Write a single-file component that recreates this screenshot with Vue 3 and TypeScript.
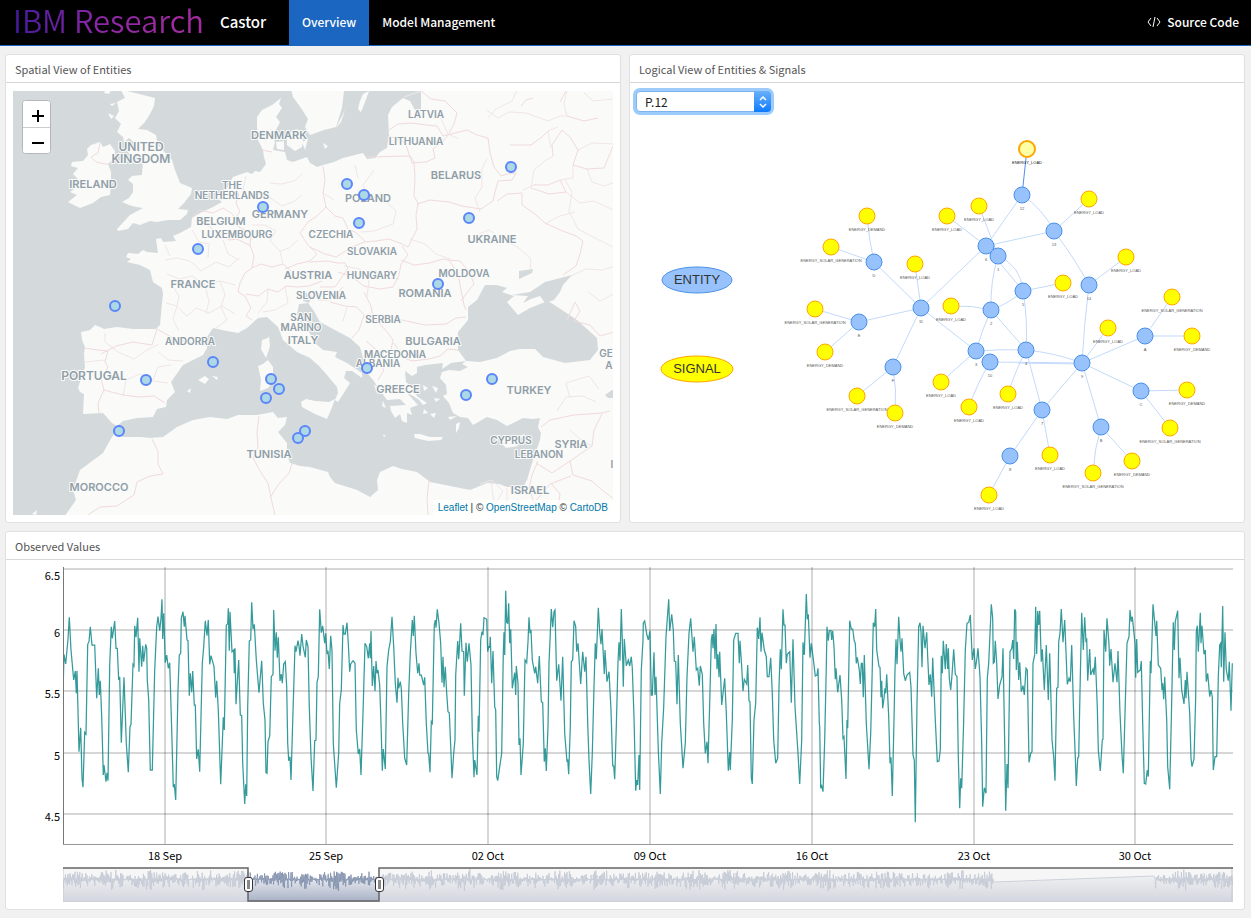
<script setup lang="ts">
import { ref } from 'vue'

type Point = [number, number]

const site = ref('P.12')
const sites = ['P.12', 'P.13', 'P.14']

/* ---------- map ---------- */
const land: string[] = [
  // continental Europe
  'M421 85 L421 110 415 110 410 101 403 98 392 107 388 115 389 135 387 148 380 152 375 158 367 159 363 153 343 158 334 162 323 165 317 167 310 163 307 157 293 162 287 160 285 152 273 150 275 142 272 136 277 128 280 122 276 117 282 108 279 104 281 98 272 105 262 110 257 117 257 126 258 140 263 150 264 157 266 164 260 172 255 171 252 174 247 172 233 177 227 188 217 198 222 202 213 207 200 213 192 218 191 227 180 233 173 236 176 241 163 242 161 238 156 239 158 253 147 252 143 250 138 254 128 253 126 257 131 259 127 262 140 265 150 270 153 282 162 288 163 294 162 303 160 325 156 329 150 329 133 329 117 327 104 329 100 327 95 325 90 330 81 332 82 340 85 347 84 354 85 367 78 388 80 392 84 394 83 414 103 413 112 423 117 426 123 421 137 418 153 417 157 409 166 407 167 400 175 392 171 382 183 365 203 355 207 348 207 337 213 328 227 331 238 333 247 328 258 318 267 317 278 327 283 340 297 352 310 358 319 366 327 375 337 387 338 393 335 400 338 402 347 388 350 383 344 378 346 371 352 371 362 378 362 373 347 363 335 357 337 352 323 350 315 343 308 330 301 322 297 314 299 304 308 303 314 311 320 322 335 330 350 338 360 347 363 358 363 368 373 380 382 393 387 400 400 399 406 405 390 406 391 411 395 418 400 414 402 421 407 423 407 413 412 415 410 408 418 405 407 393 413 396 419 400 413 388 406 382 405 371 412 376 417 373 417 367 425 365 443 363 442 369 451 363 466 361 458 350 458 332 468 320 468 307 477 300 485 285 497 285 507 288 502 292 514 296 507 302 518 315 530 308 540 304 548 301 556 306 577 320 597 338 598 350 590 360 565 363 543 357 535 349 520 349 510 351 497 358 480 362 466 361 462 364 468 367 460 371 449 370 442 372 440 378 446 385 447 394 443 396 449 403 453 413 460 417 468 418 473 425 487 417 497 420 507 426 523 418 533 419 540 418 538 427 541 433 540 440 533 460 527 480 523 487 507 487 499 484 487 483 470 490 430 482 417 472 402 469 393 466 380 472 377 480 378 490 370 497 357 490 335 483 330 477 328 472 310 467 300 466 290 463 287 455 287 443 278 432 285 425 287 417 278 418 273 412 257 415 238 415 227 419 210 417 193 420 177 427 163 437 150 438 141 437 123 437 115 433 112 437 103 453 80 470 73 490 76 500 62 520 620 520 620 85Z',
  // Great Britain
  'M126 85 L127 91 155 98 154 106 150 114 145 122 138 129 147 130 156 135 158 145 172 160 175 170 180 183 192 188 191 194 184 203 178 209 188 210 187 214 180 220 168 220 157 222 150 221 140 225 133 223 128 229 118 231 117 229 130 215 143 208 136 207 129 205 122 202 129 198 133 192 133 184 128 180 132 176 142 175 143 160 139 155 132 157 128 152 135 143 129 138 124 142 123 137 117 132 121 124 115 118 119 111 117 102 125 98 121 90Z',
  'M109 94 L113 87 107 86 104 93Z M112 106 L116 103 110 104Z M108 113 L114 116 111 119Z',
  // Ireland
  'M100 142 L103 147 110 144 115 151 114 158 108 164 111 172 111 185 110 195 101 197 93 203 80 208 68 202 77 195 70 192 78 186 71 183 78 179 73 174 78 168 71 166 72 162 83 161 88 155 87 149 91 145Z',
  // Scandinavia
  'M290 85 L293 97 301 108 308 119 305 127 310 135 324 130 336 127 342 108 344 91 344 85Z',
  'M360 101 L363 94 369 91 365 102 361 112 358 109Z M341 122 L336 128 345 110Z',
  // Danish islands
  'M287 135 L296 129 304 133 302 147 295 151 287 145Z M276 142 L284 141 284 150 277 149Z M302 142 L308 139 305 150Z M323 143 L328 146 325 149Z',
  // Corsica, Sardinia, Sicily
  'M269 336 L270 346 266 358 261 349 262 340 268 338Z',
  'M268 360 L273 367 273 382 268 388 260 391 261 380 258 366 263 364Z',
  'M335 399 L329 402 315 401 306 399 301 402 302 407 315 414 327 419 331 410Z',
  // Balearic islands
  'M198 380 L205 376 209 379 205 384Z M212 376 L218 377 217 380Z M187 391 L191 388 190 393Z',
  // Crete, Cyprus, Aegean islands
  'M414 434 L420 434 430 437 443 437 441 440 428 441 415 438Z',
  'M500 442 L506 437 514 438 525 434 518 441 518 446 506 448Z',
  'M423 385 L428 388 424 391Z M432 386 L438 388 436 393Z M434 398 L440 399 436 402Z M424 409 L428 413 423 414Z M430 414 L436 413 434 418Z M456 424 L460 422 459 428 456 433Z M448 417 L457 416 450 420Z M415 395 L427 403 423 405Z M374 384 L378 388 376 391Z M383 401 L386 408 382 406Z',
  'M32 514 L37 510 36 515Z M384 434 L386 437 383 436Z'
]
const lakes: string[] = [
  'M512 295 L530 292 545 282 572 275 563 285 560 292 554 300 545 303 540 296 531 299 523 303 528 296Z',
  'M620 391 L612 390 605 395 608 398 620 398Z',
  'M519 271 L533 269 532 273 519 279Z',
  'M303 291 L312 296 309 303 303 301Z'
]
const borders: string[] = [
  'M100 143 L98 153 91 157 96 162 105 164 112 164',
  'M228 190 L239 194 236 203 240 212 235 218 239 227 251 233 250 245 254 256 252 268 245 273 240 283 238 292 245 296 251 308 246 316 252 320',
  'M192 217 L200 210 213 213 223 208 231 213 236 218 M200 219 L211 228 219 233 229 240 237 239 251 246',
  'M252 268 L261 264 272 267 283 264 291 271 M246 294 L258 296 268 289 278 292 286 286 298 287 309 286 322 281',
  'M262 150 L272 152 M323 166 L325 180 323 193 326 207 317 216 308 222 300 233 308 245 317 254 310 261 297 264 285 269',
  'M326 207 L335 216 343 218 348 229 355 232 365 241 M310 247 L325 254 336 257 352 247 364 242 376 241 389 239 402 244 408 247',
  'M408 247 L417 229 416 215 418 203 414 196 415 178 414 162 410 156 367 157 M389 136 L405 142 412 163 426 162 435 158 433 149 444 140 449 134',
  'M389 130 L398 124 412 123 426 125 437 126 443 136 455 133 467 130 477 135 488 138 490 153 494 167 501 176 507 174 516 173 512 180 498 181 495 192 493 201 481 209 462 206 449 202 430 200 417 204',
  'M497 201 L507 194 522 193 522 205 535 214 545 223 560 230 576 236 583 241 580 254 576 266 563 275',
  'M421 91 L431 99 445 101 457 113 454 124 449 133 M338 272 L352 277 364 286 380 289 393 287 399 275 401 264 408 255 402 246',
  'M310 262 L328 261 337 263 345 263 348 268 340 280 335 287 320 287 M401 260 L414 265 430 263 443 259 449 260 458 274 461 290 464 305 466 310',
  'M449 260 L460 261 470 273 474 284 466 294 461 301 M318 300 L330 300 338 292 343 287 M330 302 L345 306 357 307 364 315 359 330 352 338 M364 292 L371 306 373 318 381 323 390 318 402 320 425 325 446 324 456 318 466 317',
  'M379 323 L388 333 393 340 391 350 381 353 373 347 366 341 M394 343 L402 357 412 361 429 359 440 356 448 349 458 350 M379 351 L379 364 384 370 378 380 M387 356 L398 360',
  'M84 348 L98 350 108 351 105 362 108 367 101 379 104 390 98 403 99 414 M101 354 L116 346 133 342 152 345 157 329',
  'M157 329 L171 337 184 341 197 344 209 345 M104 390 L123 395 139 397 154 396 165 403',
  'M152 439 L158 451 158 464 163 474 150 476 137 482 134 495 117 506 100 507 88 515',
  'M259 416 L257 432 258 447 253 458 260 471 268 483 271 498 275 515 M270 498 L278 485 289 473 292 464',
  'M429 481 L427 498 428 515 M541 427 L550 420 574 415 602 413 610 411 M602 414 L594 430 592 446 570 461 552 473 536 463 M570 461 L573 475 592 481 602 490 615 500 M538 461 L532 475 529 488 534 503 550 484 571 476 M551 483 L560 494 558 508',
  'M613 146 L604 168 587 169 573 165 578 150 570 137 562 130 552 145 553 156 M510 145 L531 145 542 137 548 131 M560 102 L566 91 M567 116 L584 121 598 118 M521 106 L526 100 533 98 M534 185 L548 185 560 180 566 192 549 194 531 188',
  'M567 320 L575 302 580 311 574 321 590 325 600 336 614 332'
]
const regions: string[] = [
  'M165 260 L177 258 190 261 201 271 216 262 229 267 239 258 M167 274 L180 279 192 276 205 285 220 281 235 285 M172 285 L179 296 177 306 187 316 196 308 209 313 222 306 235 314 M205 286 L209 301 206 314 M220 282 L225 294 221 307 227 320 216 328',
  'M165 245 L170 256 M192 230 L199 242 209 244 208 258 M223 240 L228 254 239 260 M166 303 L177 306 173 319 179 331 M85 362 L105 360 M105 333 L105 342 118 352 134 359 147 350 159 344 M123 396 L126 380 140 374 153 381 168 383 M159 352 L168 360 183 361 M153 380 L158 367 171 365',
  'M270 183 L281 184 294 181 302 174 M246 176 L243 190 248 199 259 194 270 199 M270 198 L282 206 293 202 302 195 M252 225 L265 225 276 231 270 241 280 251 289 248 298 240 M280 251 L283 264 M268 289 L267 302 258 313 M285 287 L288 303 275 310 263 312',
  'M374 170 L363 185 367 195 383 199 396 211 393 224 374 231 361 232 M410 239 L425 244 436 254 450 259 M479 234 L489 230 494 233 M507 242 L519 248 531 259 530 270 M404 97 L421 91 M440 116 L448 134 459 139 M488 118 L496 109 512 101 519 86',
  'M487 158 L482 169 482 187 475 198 480 212 M536 184 L523 190 M565 180 L572 192 569 211 578 229 597 239 615 248 M545 224 L560 216 575 212 M551 148 L548 131 558 127 M571 276 L586 269 602 270 616 266 M588 292 L600 301 614 294',
  'M557 411 L566 397 583 396 596 402 M570 398 L566 383 589 376 599 389 M480 484 L492 480 503 491 496 503 M491 482 L494 503 499 515 M507 488 L507 503 M570 430 L580 439 592 446 M347 307 L343 321 M375 270 L384 278 399 279 M344 266 L360 269 369 280 367 297',
  'M487 110 L498 118 509 112 526 113 548 121 560 116 567 116 M567 91 L564 104 567 116 M584 93 L593 101 613 99 M578 150 L592 143 613 144 M531 188 L534 170 546 160 553 156 M560 180 L573 178 573 165 M587 169 L592 182 604 186 613 183 M566 192 L580 203 594 201 613 210 M323 193 L334 200 M355 165 L358 178'
]
const places: [string, number, number, string][] = [
  ['UNITED', 141, 151, 'large'], ['KINGDOM', 141, 163, 'large'], ['IRELAND', 93, 188, 'medium'], ['DENMARK', 279, 139, 'medium'],
  ['THE', 232, 189, 'small'], ['NETHERLANDS', 232, 199, 'small'], ['BELGIUM', 221, 225, 'medium'], ['LUXEMBOURG', 237, 238, 'small'],
  ['GERMANY', 280, 218, 'medium'], ['FRANCE', 193, 288, 'medium'], ['LATVIA', 426, 118, 'small'], ['LITHUANIA', 416, 145, 'small'],
  ['BELARUS', 456, 179, 'medium'], ['POLAND', 368, 202, 'medium'], ['CZECHIA', 331, 238, 'small'], ['SLOVAKIA', 372, 255, 'small'],
  ['UKRAINE', 492, 243, 'medium'], ['AUSTRIA', 308, 279, 'medium'], ['HUNGARY', 372, 279, 'small'], ['MOLDOVA', 464, 277, 'small'],
  ['ROMANIA', 425, 297, 'medium'], ['SLOVENIA', 321, 299, 'small'], ['SAN', 301, 321, 'small'], ['MARINO', 301, 331, 'small'],
  ['ITALY', 303, 344, 'medium'], ['SERBIA', 383, 323, 'small'], ['BULGARIA', 433, 345, 'medium'], ['MACEDONIA', 395, 358, 'small'],
  ['ALBANIA', 378, 367, 'small'], ['ANDORRA', 190, 345, 'small'], ['PORTUGAL', 94, 380, 'large'], ['GREECE', 398, 393, 'medium'],
  ['TURKEY', 529, 394, 'medium'], ['CYPRUS', 511, 444, 'small'], ['SYRIA', 571, 448, 'medium'], ['LEBANON', 539, 458, 'small'],
  ['ISRAEL', 530, 494, 'medium'], ['TUNISIA', 269, 458, 'medium'], ['MOROCCO', 99, 491, 'medium'], ['GE', 606, 357, 'small'],
  ['A', 609, 369, 'small'], ['I', 612, 468, 'small']
]
const markers: Point[] = [
  [511, 167], [347, 184], [364, 195], [263, 207], [359, 223], [469, 218], [198, 249], [438, 284], [115, 306],
  [213, 362], [146, 380], [271, 379], [279, 389], [266, 398], [367, 368], [492, 379], [466, 395], [119, 431],
  [305, 431], [298, 438]
]

/* ---------- graph ---------- */
const entities: [string, number, number][] = [
  ['D', 874, 262], ['11', 921, 308], ['E', 859, 322], ['F', 893, 367], ['12', 1022, 195], ['13', 1054, 231],
  ['6', 986, 246], ['1', 998, 256], ['5', 1023, 291], ['2', 991, 310], ['3', 976, 351], ['4', 1026, 350],
  ['10', 990, 362], ['9', 1082, 363], ['14', 1089, 285], ['A', 1145, 336], ['C', 1141, 391], ['B', 1101, 427],
  ['7', 1042, 410], ['8', 1010, 456]
]
const LOAD = 'ENERGY_LOAD'
const DEMAND = 'ENERGY_DEMAND'
const SOLAR = 'ENERGY_SOLAR_GENERATION'
const signals: [string, number, number][] = [
  [DEMAND, 867, 216], [SOLAR, 831, 247], [LOAD, 915, 264], [SOLAR, 815, 309], [DEMAND, 825, 352],
  [SOLAR, 857, 396], [DEMAND, 895, 413], [LOAD, 947, 216], [LOAD, 979, 206], [LOAD, 1089, 199],
  [LOAD, 1126, 257], [LOAD, 1063, 283], [LOAD, 951, 306], [LOAD, 1108, 328], [SOLAR, 1172, 297],
  [DEMAND, 1192, 336], [DEMAND, 1187, 390], [SOLAR, 1170, 428], [LOAD, 941, 382], [LOAD, 969, 407],
  [LOAD, 1008, 394], [LOAD, 1050, 455], [SOLAR, 1093, 473], [DEMAND, 1132, 461], [LOAD, 989, 495]
]
const links: string[] = [
  'M867 216 Q869 240 874 262', 'M831 247 L874 262', 'M874 262 L921 308', 'M915 264 L921 308', 'M815 309 L859 322',
  'M859 322 L825 352', 'M859 322 L921 308', 'M921 308 L893 367', 'M893 367 L857 396', 'M893 367 Q897 390 895 413',
  'M921 308 L986 246', 'M921 308 L976 351', 'M947 216 L986 246', 'M979 206 L998 256', 'M1022 195 L986 246',
  'M1022 195 Q1042 208 1054 231', 'M1054 231 L986 246', 'M1054 231 L1089 199', 'M1054 231 Q1077 262 1089 285',
  'M1089 285 L1126 257', 'M1089 285 Q1084 324 1082 363', 'M998 256 Q1021 266 1023 291', 'M986 246 L1023 291',
  'M998 256 Q990 282 991 310', 'M1023 291 L1063 283', 'M1023 291 Q1010 303 991 310', 'M1023 291 Q1028 320 1026 350',
  'M951 306 Q972 305 991 310', 'M991 310 Q982 330 976 351', 'M991 310 L1026 350', 'M976 351 Q1000 349 1026 350',
  'M976 351 L941 382', 'M990 362 Q976 386 969 407', 'M990 362 L1082 363', 'M1026 350 Q1056 353 1082 363',
  'M1018 363 L1082 364', 'M1026 350 Q1014 374 1008 394', 'M1026 350 L1042 410', 'M1042 410 L1082 363',
  'M1042 410 L1010 456', 'M1042 410 L1050 455', 'M1010 456 L989 495', 'M1082 363 L1108 328', 'M1082 363 L1145 336',
  'M1145 336 L1172 297', 'M1145 336 L1192 336', 'M1082 363 L1141 391', 'M1141 391 L1187 390', 'M1141 391 L1170 428',
  'M1082 363 L1101 427', 'M1101 427 Q1094 450 1093 473', 'M1101 427 L1132 461'
]

/* ---------- observed values, in thirds of a plot unit ---------- */
const samples: { x: number; y: number; points: string }[] = [
  {
    x: 190, y: 111,
    points: '190,490 193,373 198,402 205,328 209,262 214,360 222,450 227,423 230,490 232,422 238,665 243,593 247,745 250,772 255,607 259,612 264,343 268,335 272,290 277,345 285,345 291,505 296,415 299,495 302,452 306,560 311,735 313,705 319,755 322,728 325,752 330,405 335,290 338,325 345,273 349,355 353,355 357,450 360,440 365,638 373,442 380,640 386,727 391,590 394,583 400,403 403,408 405,287 409,322 414,263 418,425 420,325 426,410 429,347 432,395 438,343 441,355 443,450 447,510 452,720 458,720 465,420 471,290 475,260 480,302 484,265 487,208 489,327 492,250 497,398 501,375 506,415 510,398 516,600 521,772 524,762 528,810 535,480 539,375 543,370 545,265 550,245 554,290 556,257 562,330 565,332 569,497 572,430 576,487 579,423 584,525 587,525 591,687 596,658 600,725 604,560 608,400 612,350 617,272 622,317 626,270 630,403 634,377 643,410 648,503 651,452 656,540 663,763 671,562 674,600 680,285 684,282 686,235 689,362 691,245 697,365 702,360 704,430 706,355 709,523 713,457 717,390 722,555 726,557 729,700 735,822 738,763 741,798 744,530 749,333 753,330 756,217 760,297 764,283 770,390 778,488 786,392 791,520 796,570 799,728 802,730 805,635 810,618 815,440 820,433 822,240 826,362 830,307 833,383 836,322 841,453 845,432 848,460 852,402 857,395 861,470 864,640 867,692 871,680 874,750 880,545 886,347 889,365 895,332 898,348 901,377 906,312 910,348 917,382 920,330 925,350 929,530 934,680 940,783 945,632 949,630 952,457 956,440 960,238 965,308 969,288 975,340 978,310 982,372 985,362 989,417 993,317 997,362 1001,640 1010,773 1017,668 1020,520 1025,480 1030,285 1033,312 1037,312 1042,278 1046,340 1050,425 1053,402 1060,392 1066,400 1070,600 1076,672 1080,657 1084,735 1090,550 1096,340 1101,350 1106,385 1110,340 1112,385 1114,303 1118,468 1122,408 1126,483 1129,393 1132,430 1135,420 1140,465 1144,580 1148,722 1151,657 1157,717 1162,410 1167,360 1172,335 1177,260 1182,350 1187,460 1192,518 1195,443 1197,475 1202,455 1205,475 1209,580 1215,685 1221,705 1227,490 1232,370 1238,270 1241,318 1244,257 1249,370 1254,430 1258,400'
  },
  {
    x: -1010, y: 21,
    points: '60,345 65,345 72,375 75,352 80,490 85,580 87,582 91,637 95,485 98,490 104,195 107,180 109,203 113,148 118,190 123,250 127,368 130,290 133,382 137,320 141,400 145,455 149,458 154,580 157,655 162,580 166,540 168,345 174,243 177,298 183,190 187,273 192,275 194,407 199,248 203,305 208,250 214,315 218,520 223,652 225,600 232,645 236,467 238,515 243,240 247,215 250,225 253,173 261,178 264,275 267,260 270,262 272,230 276,370 280,273 285,440 288,450 291,650 294,662 300,620 306,580 311,280 313,217 315,285 318,92 321,188 324,190 327,130 330,250 333,208 338,385 345,338 348,405 350,318 355,370 358,555 361,535 364,645 371,550 376,300 381,308 385,245 388,172 391,220 394,210 398,300 405,340 408,320 414,370 419,288 425,425 429,428 434,605 437,565 440,633 445,500 448,310 452,220 455,147 459,202 463,155 466,150 471,362 477,313 484,422 489,290 495,520 502,605 504,598 507,643 512,500 515,305 519,300 523,182 528,200 531,275 535,250 543,372 549,275 555,335 559,290 564,490 568,600 573,702 578,580 583,380 587,250 590,298 596,143 600,215 604,253 607,207 614,342 616,270 622,365 628,335 634,450 639,617 642,618 645,658 650,500 655,305 658,247 661,302 665,147 668,240 671,380 674,237 680,317 686,300 690,318 695,290 698,325 703,470 708,692 711,660 714,675 718,585 720,690 725,330 730,240 731,190 735,183 741,222 746,240 751,213 755,405 758,405 763,277 766,405 769,350 776,570 782,702 786,550 792,440 799,230 804,160 807,118 810,213 816,163 821,210 824,303 828,305 832,433 836,285 842,490 850,625 857,550 862,350 868,220 873,175 880,275 884,230 890,330 894,325 899,377 902,318 908,343 912,490 917,580 922,545 925,610 930,430 935,240 938,222 940,265 943,207 946,297 949,192 952,328 955,283 958,352 960,275 966,435 975,355 980,460 986,632 990,577 992,630 998,480 1002,240 1008,220 1015,220 1019,310 1021,242 1026,320 1030,393 1034,358 1041,372 1044,315 1048,422 1051,425 1055,655 1058,672 1063,480 1068,430 1073,203 1077,237 1081,172 1084,275 1087,218 1094,270 1100,290 1103,350 1108,350 1113,293 1118,400 1122,540 1128,610 1134,595 1138,380 1142,268 1145,328 1150,148 1153,195 1156,195 1160,310 1163,283 1170,275 1175,428 1180,238 1186,440 1195,580 1200,672 1206,540 1210,247 1214,285 1220,102 1223,178 1226,163 1231,293 1235,250 1240,290 1247,348 1252,345 1255,325 1259,490'
  },
  {
    x: -2270, y: 21,
    points: '0,500 3,685 6,678 10,695 15,540 20,320 22,200 26,242 29,212 34,212 36,240 39,212 43,260 47,358 49,325 54,397 61,345 66,420 70,535 73,530 79,657 82,480 84,505 90,182 95,207 99,207 104,243 107,250 110,310 113,292 119,330 122,372 125,310 128,310 131,412 134,285 140,490 148,628 153,520 157,360 161,188 165,200 168,147 171,270 178,320 181,322 184,412 186,362 189,445 193,415 196,385 198,400 201,343 207,470 211,610 214,592 218,708 223,480 226,330 229,238 232,313 237,170 241,240 244,275 247,235 252,340 257,362 262,345 270,337 274,380 280,585 284,600 287,787 292,430 297,200 301,188 304,215 307,322 310,197 316,265 321,217 324,290 328,375 332,343 336,410 339,293 347,480 353,605 358,603 362,570 365,287 368,340 371,242 377,328 380,252 384,327 386,265 389,355 393,390 397,345 402,268 407,343 412,350 416,590 420,745 423,655 426,685 432,480 437,270 442,190 447,187 452,165 458,300 463,265 467,327 471,300 475,265 481,350 486,550 489,740 494,683 499,700 503,355 507,310 515,133 519,175 521,310 524,307 527,242 531,310 535,417 540,375 547,350 550,265 555,550 558,752 562,612 565,685 571,275 576,265 579,240 582,297 585,148 588,155 590,330 593,245 597,360 600,307 605,395 610,377 614,405 619,325 623,330 628,607 633,580 637,575 640,310 645,285 648,140 651,282 654,153 657,195 660,152 665,305 668,268 674,390 680,255 686,420 690,280 695,455 697,540 702,590 706,662 711,385 715,382 717,245 721,220 725,147 730,247 735,180 743,373 748,355 752,365 756,255 762,470 767,590 770,678 774,595 777,590 782,350 786,158 791,270 795,172 799,247 801,235 804,362 810,267 813,345 820,327 823,345 827,290 833,440 836,570 842,633 848,540 850,538 853,210 858,275 862,175 868,253 870,317 874,267 880,367 886,310 892,367 895,273 901,460 907,585 911,640 917,430 922,250 928,230 931,150 935,185 938,170 946,250 948,353 951,237 954,337 962,330 965,303 969,490 974,670 978,672 983,630 986,650 992,303 994,340 1000,133 1009,228 1011,182 1016,315 1023,325 1027,390 1029,370 1032,418 1035,350 1041,480 1044,620 1050,688 1055,480 1061,187 1064,270 1067,185 1074,152 1078,355 1081,293 1086,390 1093,432 1097,360 1099,415 1102,335 1110,460 1114,595 1117,620 1123,597 1128,410 1130,215 1133,197 1136,275 1142,158 1144,250 1147,197 1153,283 1157,270 1160,365 1164,340 1170,410 1174,390 1178,410 1181,630 1186,590 1191,590 1196,350 1200,255 1203,250 1205,322 1209,138 1212,365 1216,217 1220,330 1226,362 1229,305 1234,452 1238,310'
  }
]
const series = samples
  .flatMap(({ x, y, points }) =>
    points.split(' ').map((pair) => {
      const [px, py] = pair.split(',').map(Number)
      return `${((px - x) / 3).toFixed(1)},${((py - y) / 3).toFixed(1)}`
    })
  )
  .join(' ')

/* label centred on its gridline, kept inside the plot at the top */
const yTicks: [string, number][] = [['6.5', 2], ['6', 63], ['5.5', 124], ['5', 186], ['4.5', 247]]
const labelTop = (y: number) => Math.max(2, y - 4)
const xTicks: [string, number][] = [
  ['18 Sep', 102], ['25 Sep', 263], ['02 Oct', 425], ['09 Oct', 587], ['16 Oct', 749], ['23 Oct', 911], ['30 Oct', 1072]
]

/* ---------- overview strip ---------- */
function buildOverview(): string {
  let seed = 7
  const random = () => {
    seed = (seed * 16807) % 2147483647
    return seed / 2147483647
  }
  const out: string[] = []
  for (let step = 0; step <= 1950; step += 1) {
    const x = step * 0.6
    if (x > 930 && x < 1092) continue
    const swell = 0.75 + 0.25 * Math.sin(x / 6) * Math.sin(x / 37)
    const reach = Math.pow(random(), 1.6)
    const offset = step % 2 === 0 ? -reach * 10 : 1 + reach * 12
    out.push(`${x.toFixed(1)},${(12 + offset * swell).toFixed(1)}`)
    if (step === 1550) out.push('931,15', '1091,9')
  }
  return out.join(' ')
}
const overview = buildOverview()
</script>

<template>
  <div class="page">
    <header class="topbar">
      <a class="brand" href="#"><span class="logo">IBM Research</span><span class="product">Castor</span></a>
      <nav class="tabs">
        <a class="tab active" href="#overview">Overview</a>
        <a class="tab" href="#models">Model Management</a>
      </nav>
      <a class="source" href="#source">
        <svg class="code-icon" viewBox="0 0 14 10" aria-hidden="true">
          <path d="M4 1 L1 5 L4 9 M10 1 L13 5 L10 9 M8 0 L6 10" />
        </svg>
        Source Code
      </a>
    </header>

    <main class="board">
      <section class="panel">
        <h2>Spatial View of Entities</h2>
        <div class="map">
          <svg class="map-canvas" viewBox="13 91 600 424" preserveAspectRatio="xMidYMid slice" role="img" aria-label="Map of Europe">
            <path v-for="(d, i) in land" :key="'l' + i" class="land" :d="d" />
            <path v-for="(d, i) in lakes" :key="'w' + i" class="lake" :d="d" />
            <path v-for="(d, i) in regions" :key="'r' + i" class="region" :d="d" />
            <path v-for="(d, i) in borders" :key="'b' + i" class="border" :d="d" />
            <text v-for="[name, x, y, size] in places" :key="name" :class="['place', size]" :x="x" :y="y">{{ name }}</text>
            <circle v-for="([x, y], i) in markers" :key="'m' + i" class="marker" :cx="x" :cy="y" r="5" />
          </svg>
          <div class="zoom">
            <button type="button" aria-label="Zoom in">
              <svg viewBox="0 0 12 12" aria-hidden="true"><path d="M0 6 H12 M6 0 V12" /></svg>
            </button>
            <button type="button" aria-label="Zoom out">
              <svg viewBox="0 0 12 12" aria-hidden="true"><path d="M0 6 H12" /></svg>
            </button>
          </div>
          <div class="attribution">
            <a href="#leaflet">Leaflet</a> | © <a href="#osm">OpenStreetMap</a> © <a href="#carto">CartoDB</a>
          </div>
        </div>
      </section>

      <section class="panel">
        <h2>Logical View of Entities &amp; Signals</h2>
        <div class="graph">
          <div class="picker">
            <select v-model="site" aria-label="Entity">
              <option v-for="s in sites" :key="s">{{ s }}</option>
            </select>
            <span class="arrows">
              <svg viewBox="0 0 8 14" aria-hidden="true"><path d="M1 5 L4 2 L7 5 M1 9 L4 12 L7 9" /></svg>
            </span>
          </div>
          <svg class="network" viewBox="630 115 614 406" role="img" aria-label="Entities and signals">
            <path v-for="(d, i) in links" :key="i" class="link" :d="d" />
            <path class="link strong" d="M1027 149 L1022 195" />
            <g v-for="[name, x, y] in entities" :key="name" class="node entity">
              <circle :cx="x" :cy="y" r="8" />
              <text :x="x" :y="y + 15">{{ name }}</text>
            </g>
            <g v-for="([name, x, y], i) in signals" :key="i" class="node signal">
              <circle :cx="x" :cy="y" r="8" />
              <text :x="x" :y="y + 15">{{ name }}</text>
            </g>
            <g class="node signal selected">
              <circle cx="1027" cy="149" r="8" />
              <text x="1027" y="164">ENERGY_LOAD</text>
            </g>
            <g class="key entity">
              <ellipse cx="697" cy="280" rx="35" ry="13" />
              <text x="697" y="284">ENTITY</text>
            </g>
            <g class="key signal">
              <ellipse cx="697" cy="369" rx="36" ry="13" />
              <text x="697" y="373">SIGNAL</text>
            </g>
          </svg>
        </div>
      </section>

      <section class="panel wide">
        <h2>Observed Values</h2>
        <div class="chart">
          <div class="y-axis">
            <span v-for="[t, y] in yTicks" :key="t" :style="{ top: labelTop(y) + 'px' }">{{ t }}</span>
          </div>
          <svg class="plot" viewBox="0 0 1170 278" preserveAspectRatio="none" role="img" aria-label="Observed values over time">
            <path v-for="[t, y] in yTicks" :key="t" class="grid" :d="`M0 ${y} H1170`" />
            <path v-for="[t, x] in xTicks" :key="t" class="grid" :d="`M${x} 0 V278`" />
            <polyline class="series" :points="series" />
            <path class="axis" d="M0 0 V278" />
            <path class="axis base" d="M0 278 H1170" />
          </svg>
          <div class="x-axis">
            <span v-for="[t, x] in xTicks" :key="t" :style="{ left: (x / 1170) * 100 + '%' }">{{ t }}</span>
          </div>
          <div class="range">
            <svg viewBox="0 0 1170 35" preserveAspectRatio="none" role="img" aria-label="Selected time range">
              <defs>
                <linearGradient id="fade" x1="0" y1="0" x2="0" y2="1">
                  <stop offset="0" stop-color="#ffffff" />
                  <stop offset="1" stop-color="#a6afc4" />
                </linearGradient>
              </defs>
              <polygon :points="`0,35 ${overview} 1170,35`" fill="url(#fade)" />
              <polyline class="strip" :points="overview" />
              <path class="veil" d="M0 0 H185 V35 H0Z M316 0 H1170 V35 H316Z" />
              <path class="frame" d="M0 35 V1 M1169 0 V35 M0 35 H1170" />
              <path class="window" d="M0 1 H185 V34 H316 V1 H1170" />
            </svg>
            <span v-for="x in [185, 316]" :key="x" class="handle" :style="{ left: (x / 1170) * 100 + '%' }"></span>
          </div>
        </div>
      </section>
    </main>
  </div>
</template>

<style>
body {
  margin: 0;
  background: #f1f1f1;
}
</style>

<style scoped>
.page {
  font-family: "Noto Sans CJK SC", "Noto Sans", sans-serif;
  font-size: 12px;
  color: #000;
}
.topbar {
  display: flex;
  align-items: stretch;
  height: 45px;
  background: #000;
  border-bottom: 1px solid #1a66c0;
  color: #fff;
}
.topbar a {
  color: #fff;
  text-decoration: none;
}
.brand {
  display: flex;
  align-items: flex-start;
  gap: 16px;
  width: 276px;
  padding-left: 13px;
}
.logo {
  font-size: 31px;
  font-weight: 350;
  line-height: 40px;
  white-space: nowrap;
  background: linear-gradient(90deg, #431a9c, #8b27a6 45%, #a52c9c);
  background-clip: text;
  color: transparent;
}
.product {
  font-size: 15px;
  font-weight: 500;
  line-height: 44px;
}
.tabs {
  display: flex;
}
.tab {
  padding: 0 13px;
  font-size: 12px;
  font-weight: 500;
  line-height: 44px;
}
.active {
  background: #1a66c0;
}
.source {
  display: flex;
  align-items: center;
  gap: 6px;
  margin-left: auto;
  padding: 0 12px 1px 0;
  font-size: 12px;
  font-weight: 500;
  line-height: 44px;
}
.code-icon {
  width: 14px;
  height: 10px;
  fill: none;
  stroke: #fff;
  stroke-width: 1;
}
.board {
  display: grid;
  grid-template-columns: minmax(0, 1fr) minmax(0, 1fr);
  gap: 8px;
  padding: 8px 6px 8px 5px;
}
.panel {
  background: #fff;
  border: 1px solid #e0e0e0;
  border-radius: 3px;
  display: flex;
  flex-direction: column;
}
.wide {
  grid-column: 1 / -1;
}
h2 {
  margin: 0;
  padding: 2px 9px 0;
  border-bottom: 1px solid #d8d8d8;
  font-size: 11px;
  font-weight: 400;
  line-height: 25px;
  color: #555;
}
.map {
  position: relative;
  margin: 8px 7px 7px;
  aspect-ratio: 600 / 424;
  background: #d4dadc;
  overflow: hidden;
}
.map-canvas {
  display: block;
  width: 100%;
  height: 100%;
}
.land {
  fill: #fafaf8;
}
.lake {
  fill: #d4dadc;
}
.border,
.region {
  fill: none;
  stroke: #f1dadd;
  stroke-width: 1;
  stroke-linejoin: round;
}
.region {
  stroke: #f1e6e7;
}
.place {
  font-family: Inter, "Open Sans", sans-serif;
  font-weight: 600;
  fill: #8f9ea8;
  stroke: #fafaf8;
  stroke-width: 2;
  stroke-linejoin: round;
  paint-order: stroke;
  text-anchor: middle;
}
.small {
  font-size: 10px;
}
.medium {
  font-size: 11px;
}
.large {
  font-size: 12px;
}
.marker {
  fill: #add8e6;
  stroke: #5a86fa;
  stroke-width: 2;
}
.zoom {
  position: absolute;
  left: 9px;
  top: 9px;
  width: 27px;
  border: 1px solid #b4b8ba;
  border-radius: 4px;
  background: #fff;
  overflow: hidden;
}
.zoom button {
  display: flex;
  align-items: center;
  justify-content: center;
  width: 100%;
  height: 26px;
  padding: 4px 0 0 2px;
  border: 0;
  background: #fff;
}
.zoom button + button {
  border-top: 1px solid #ccc;
}
.zoom svg {
  width: 12px;
  height: 12px;
  stroke: #000;
  stroke-width: 2;
}
.attribution {
  position: absolute;
  right: 0;
  bottom: 0;
  padding: 0 5px;
  background: rgba(255, 255, 255, 0.7);
  font: 10px/15px "Liberation Sans", Arial, sans-serif;
  color: #333;
}
.attribution a {
  color: #0078a8;
  text-decoration: none;
}
.graph {
  display: flex;
  flex-direction: column;
  flex: 1;
}
.picker {
  position: relative;
  width: 135px;
  margin: 8px 6px 3px;
}
.picker select {
  display: block;
  appearance: none;
  width: 100%;
  height: 21px;
  padding: 0 24px 0 8px;
  border: 1px solid #7fb3ee;
  border-radius: 4px;
  background: #fff;
  box-shadow: 0 0 0 3px #9ccbfc;
  font: 12px/19px "Noto Sans CJK SC", "Noto Sans", sans-serif;
  color: #222;
}
.arrows {
  position: absolute;
  top: 0;
  right: 0;
  display: grid;
  place-items: center;
  width: 17px;
  height: 21px;
  border-radius: 0 4px 4px 0;
  background: linear-gradient(#69b0f9, #0f7bff);
  pointer-events: none;
}
.arrows svg {
  width: 8px;
  height: 14px;
  fill: none;
  stroke: #fff;
  stroke-width: 1.5;
}
.network {
  display: block;
  width: 100%;
  font-family: "Liberation Sans", Arial, sans-serif;
}
.link {
  fill: none;
  stroke: #c3dafb;
  stroke-width: 1;
}
.strong {
  stroke: #4f8fe8;
}
.node text {
  font-size: 4px;
  fill: #555;
  text-anchor: middle;
}
.entity circle,
.entity ellipse {
  fill: #97c2fc;
  stroke: #4a90e8;
  stroke-width: 1;
}
.signal circle,
.signal ellipse {
  fill: #ff0;
  stroke: #ffa500;
  stroke-width: 1;
}
.selected circle {
  fill: #ffffa5;
  stroke-width: 2;
}
.selected text {
  fill: #111;
}
.key text {
  font-size: 13px;
  fill: #333;
  text-anchor: middle;
}
.chart {
  display: grid;
  grid-template-columns: 49px minmax(0, 1fr);
  column-gap: 8px;
  padding: 7px 11px 7px 0;
}
.y-axis {
  position: relative;
}
.y-axis span {
  position: absolute;
  right: -5px;
  font-size: 11px;
  line-height: 12px;
}
.plot {
  display: block;
  width: 100%;
  height: 278px;
}
.grid {
  fill: none;
  stroke: #000;
  stroke-opacity: 0.16;
  stroke-width: 2;
}
.series {
  fill: none;
  stroke: #108888;
  stroke-opacity: 0.85;
  stroke-width: 1.25;
}
.axis {
  stroke: #777;
  stroke-width: 2;
}
.base {
  stroke: #999;
}
.x-axis {
  grid-column: 2;
  position: relative;
  height: 22px;
}
.x-axis span {
  position: absolute;
  top: 2px;
  font-size: 11px;
  line-height: 16px;
  white-space: nowrap;
  transform: translateX(-50%);
}
.range {
  grid-column: 2;
  position: relative;
  height: 35px;
}
.range svg {
  display: block;
  width: 100%;
  height: 35px;
}
.strip {
  fill: none;
  stroke: #808fab;
  stroke-width: 1;
  stroke-opacity: 0.8;
}
.veil {
  fill: #f0f0f0;
  fill-opacity: 0.6;
}
.frame {
  fill: none;
  stroke: #c8c8d0;
  stroke-width: 1;
}
.window {
  fill: none;
  stroke: #666;
  stroke-width: 1.5;
}
.handle {
  position: absolute;
  top: 10px;
  box-sizing: content-box;
  width: 3px;
  height: 9px;
  margin-left: -4px;
  padding: 2px;
  border: 1px solid #333;
  border-radius: 3px;
  background: linear-gradient(#888, #888) content-box, #fff;
}
</style>
